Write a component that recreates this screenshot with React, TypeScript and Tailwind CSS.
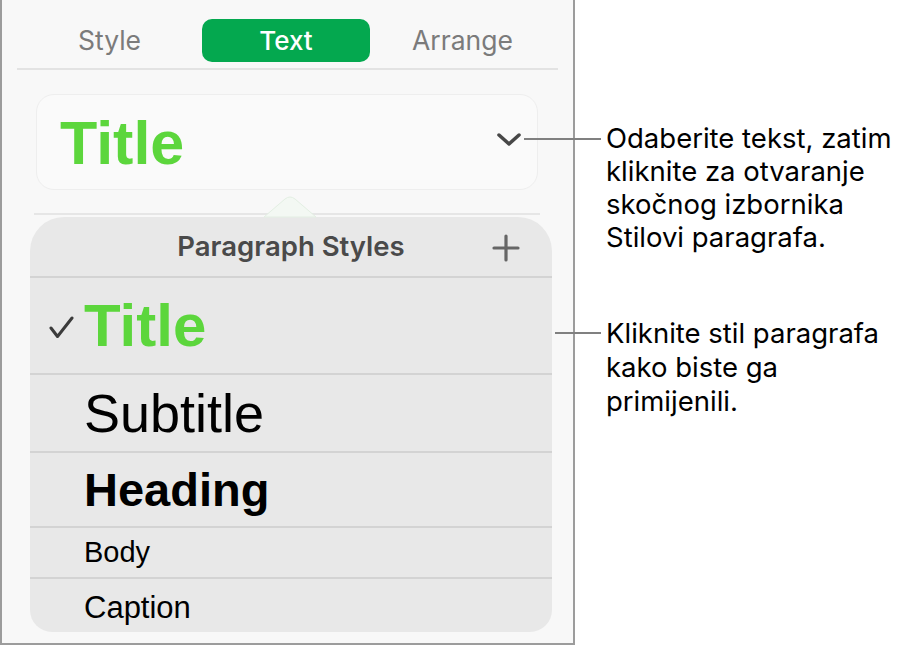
import React from 'react';

const styles = [
  { name: 'Title', row: 'h-[95px]', text: 'text-[60px] font-bold text-[#5cd63c]', checked: true },
  { name: 'Subtitle', row: 'h-[76px]', text: 'text-[54px] text-black' },
  { name: 'Heading', row: 'h-[73px]', text: 'text-[47px] font-bold text-black' },
  { name: 'Body', row: 'h-[49px]', text: 'text-[29px] text-black' },
  { name: 'Caption', row: 'h-[53px] pt-[4px]', text: 'text-[31px] text-black' },
];

function Callout({ lines, lineLeft, lineWidth, leading, className }: {
  lines: string[];
  lineLeft: string;
  lineWidth: string;
  leading: string;
  className: string;
}) {
  return (
    <div className={`relative ${className}`}>
      {/* connector line running back into the panel */}
      <div className={`absolute top-[16px] h-[2px] bg-[#808080] ${lineLeft} ${lineWidth}`} />
      {lines.map((l) => (
        <div key={l} className={`whitespace-nowrap text-[27.5px] text-black ${leading}`}>
          {l}
        </div>
      ))}
    </div>
  );
}

export default function App() {
  return (
    <div className="flex w-[904px] h-[646px] bg-white font-['Inter',sans-serif]">
      {/* inspector panel */}
      <div className="flex flex-col w-[575px] h-[645px] shrink-0 border-2 border-t-0 border-[#9c9c9c] bg-[#f8f8f8]">
        {/* tabs */}
        <div className="flex mt-[19px] mx-[15px] h-[43px] items-center">
          <div className="w-[185px] text-center text-[26.5px] text-[#7b7b7b]">Style</div>
          <div className="w-[168px] h-[43px] flex items-center justify-center rounded-[10px] bg-[#04a84f] text-[26px] font-medium text-white">
            Text
          </div>
          <div className="w-[185px] text-center text-[26.5px] text-[#7b7b7b]">Arrange</div>
        </div>
        <div className="mt-[6px] mx-[15px] h-[2px] bg-[#e3e3e3]" />

        {/* current style picker */}
        <div className="flex items-center justify-between mt-[24px] ml-[34px] w-[502px] h-[96px] rounded-[18px] border border-[#eeeeee] bg-[#fafafa] pl-[23px] pr-[15px]">
          <span className="font-['Liberation_Sans',Arial,sans-serif] text-[61px] font-bold leading-none text-[#5cd63c] mt-[2px]">
            Title
          </span>
          <svg width="26" height="16" viewBox="0 0 26 16" className="mt-[-4px]">
            <path d="M3 3 L13 12 L23 3" fill="none" stroke="#474747" strokeWidth="3.5" strokeLinecap="round" strokeLinejoin="round" />
          </svg>
        </div>
        <div className="mt-[23px] ml-[32px] w-[506px] h-[2px] bg-[#e6e6e6]" />

        {/* paragraph styles popover */}
        <div className="relative mt-[2px] ml-[28px] w-[522px] h-[415px] flex flex-col rounded-t-[34px] rounded-b-[22px] bg-[#e8e8e8]">
          <svg width="56" height="24" viewBox="0 0 56 24" className="absolute left-[232px] top-[-23px]">
            <path d="M2 23 L23 5 Q28 1 33 5 L54 23 Z" fill="#f3f8f3" stroke="#e3efe3" strokeWidth="1" />
          </svg>
          <div className="relative flex h-[59px] items-center justify-center">
            <span className="text-[27.5px] font-semibold text-[#4a4a4a] mt-[1px]">Paragraph Styles</span>
            <svg width="28" height="28" viewBox="0 0 28 28" className="absolute right-[32px] top-[17px]">
              <path d="M14 2 V26 M2 14 H26" stroke="#666666" strokeWidth="3.2" strokeLinecap="round" />
            </svg>
          </div>
          {styles.map((s) => (
            <React.Fragment key={s.name}>
              <div className="h-[2px] bg-[#d3d3d3]" />
              <div className={`relative flex items-center pl-[54px] ${s.row}`}>
                {s.checked && (
                  <svg width="26" height="24" viewBox="0 0 26 24" className="absolute left-[19px] top-[38px]">
                    <path d="M2 12 L8.5 20.5 L23 2" fill="none" stroke="#3b3b3b" strokeWidth="3" strokeLinecap="round" strokeLinejoin="round" />
                  </svg>
                )}
                <span className={`font-['Liberation_Sans',Arial,sans-serif] leading-none ${s.text}`}>{s.name}</span>
              </div>
            </React.Fragment>
          ))}
        </div>
      </div>

      {/* callouts */}
      <div className="flex flex-col pl-[31px]">
        <Callout
          className="mt-[122px]"
          lineLeft="left-[-82px]"
          lineWidth="w-[77px]"
          leading="leading-[33px]"
          lines={['Odaberite tekst, zatim', 'kliknite za otvaranje', 'skočnog izbornika', 'Stilovi paragrafa.']}
        />
        <Callout
          className="mt-[62px]"
          lineLeft="left-[-51px]"
          lineWidth="w-[46px]"
          leading="leading-[34px]"
          lines={['Kliknite stil paragrafa', 'kako biste ga', 'primijenili.']}
        />
      </div>
    </div>
  );
}
